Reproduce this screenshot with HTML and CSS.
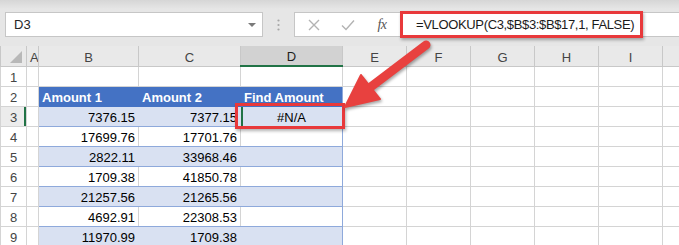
FILE: index.html
```html
<!DOCTYPE html>
<html>
  <head>
    <meta charset="utf-8">
    <title>VLOOKUP #N/A</title>
    <link rel="stylesheet" href="styles.css">
  </head>

  <body>
    <div class="app">
      <div class="toolbar">
        <div class="namebox"><span>D3</span><span class="caret"></span></div>
        <div class="grip">
          <svg width="3" height="12" viewBox="0 0 3 12"><circle cx="1.5" cy="1.5" r="1.1"/><circle cx="1.5" cy="6" r="1.1"/><circle cx="1.5" cy="10.5" r="1.1"/></svg>
        </div>
        <div class="fxbar">
          <span class="btn"><svg width="12" height="12" viewBox="0 0 12 12"><path d="M1 1 L11 11 M11 1 L1 11"/></svg></span>
          <span class="btn"><svg width="14" height="12" viewBox="0 0 14 12"><path d="M1 6.5 L5 10.5 L13 1.5"/></svg></span>
          <span class="btn fx">fx</span>
          <div class="formula">=VLOOKUP(C3,$B$3:$B$17,1, FALSE)</div>
        </div>
      </div>

      <div class="sheetwrap">
        <table class="sheet">
          <colgroup>
            <col style="width:26px"><col style="width:12px"><col style="width:100px"><col style="width:102px"><col style="width:102px">
            <col style="width:64px"><col style="width:64px"><col style="width:64px"><col style="width:64px"><col style="width:64px"><col style="width:40px">
          </colgroup>
          <tr class="colhead">
            <th class="corner"><span class="tri"></span></th><th>A</th><th>B</th><th>C</th><th class="sel">D</th><th>E</th><th>F</th><th>G</th><th>H</th><th>I</th><th></th>
          </tr>
          <tr>
            <th class="rowhead">1</th><td></td><td></td><td></td><td></td><td></td><td></td><td></td><td></td><td></td><td></td>
          </tr>
          <tr>
            <th class="rowhead">2</th><td></td><td class="hdr first">Amount 1</td><td class="hdr">Amount 2</td><td class="hdr last">Find Amount</td><td></td><td></td><td></td><td></td><td></td><td></td>
          </tr>
          <tr class="band">
            <th class="rowhead cur">3</th><td></td><td class="num first">7376.15</td><td class="num">7377.15</td><td class="ctr last active">#N/A</td><td></td><td></td><td></td><td></td><td></td><td></td>
          </tr>
          <tr class="plain">
            <th class="rowhead">4</th><td></td><td class="num first">17699.76</td><td class="num">17701.76</td><td class="last"></td><td></td><td></td><td></td><td></td><td></td><td></td>
          </tr>
          <tr class="band">
            <th class="rowhead">5</th><td></td><td class="num first">2822.11</td><td class="num">33968.46</td><td class="last"></td><td></td><td></td><td></td><td></td><td></td><td></td>
          </tr>
          <tr class="plain">
            <th class="rowhead">6</th><td></td><td class="num first">1709.38</td><td class="num">41850.78</td><td class="last"></td><td></td><td></td><td></td><td></td><td></td><td></td>
          </tr>
          <tr class="band">
            <th class="rowhead">7</th><td></td><td class="num first">21257.56</td><td class="num">21265.56</td><td class="last"></td><td></td><td></td><td></td><td></td><td></td><td></td>
          </tr>
          <tr class="plain">
            <th class="rowhead">8</th><td></td><td class="num first">4692.91</td><td class="num">22308.53</td><td class="last"></td><td></td><td></td><td></td><td></td><td></td><td></td>
          </tr>
          <tr class="band">
            <th class="rowhead">9</th><td></td><td class="num first">11970.99</td><td class="num">1709.38</td><td class="last"></td><td></td><td></td><td></td><td></td><td></td><td></td>
          </tr>
        </table>
      </div>

      <!-- annotation: box round D3 and arrow from the formula -->
      <div class="callout"></div>
      <svg class="arrow" width="679" height="245" viewBox="0 0 679 245">
        <line x1="426" y1="45" x2="368" y2="89"/>
        <polygon points="345,107 361,75 380,99"/>
      </svg>
    </div>
  </body>
</html>
```

FILE: styles.css
```css
html, body {
  margin: 0;
  padding: 0;
}
body {
  width: 679px;
  height: 245px;
  overflow: hidden;
  background: #fff;
  font-family: "Liberation Sans", Arial, sans-serif;
}
.app {
  position: relative;
  width: 679px;
  height: 245px;
  overflow: hidden;
}

/* formula bar */
.toolbar {
  height: 46px;
  box-sizing: border-box;
  padding: 12px 0 0 5px;
  display: flex;
  align-items: flex-start;
  background: linear-gradient(#d6d6d6, #e6e6e6 9px, #e6e6e6);
}
.namebox {
  width: 258px;
  height: 25px;
  box-sizing: border-box;
  border: 1px solid #c6c6c6;
  background: #fff;
  display: flex;
  align-items: center;
  justify-content: space-between;
  padding: 0 6px 0 8px;
  font-size: 13px;
  color: #262626;
}
.caret {
  width: 0;
  height: 0;
  border-left: 4px solid transparent;
  border-right: 4px solid transparent;
  border-top: 4px solid #7a7a7a;
}
.grip {
  width: 31px;
  height: 25px;
  display: flex;
  align-items: center;
  justify-content: center;
}
.grip svg {
  fill: #a6a6a6;
}
.fxbar {
  flex: 1;
  height: 25px;
  margin-right: -30px;
  box-sizing: border-box;
  border: 1px solid #c6c6c6;
  background: #fff;
  display: flex;
  align-items: center;
  padding-left: 9px;
}
.btn {
  width: 20px;
  height: 20px;
  display: flex;
  align-items: center;
  justify-content: center;
  margin-right: 14px;
}
.btn svg path {
  fill: none;
  stroke: #b3b3b3;
  stroke-width: 1.4;
}
.btn.fx {
  margin-right: 8px;
  font-family: "Liberation Serif", "Times New Roman", serif;
  font-style: italic;
  font-size: 14px;
  color: #555;
  letter-spacing: -0.5px;
}
.formula {
  width: 243px;
  height: 27px;
  margin: -2px 0;
  box-sizing: border-box;
  border: 3px solid #e8393b;
  box-shadow: 1px 2px 3px rgba(0, 0, 0, 0.3);
  background: #fff;
  padding-left: 13px;
  font-size: 13px;
  line-height: 21px;
  letter-spacing: -0.35px;
  color: #1a1a1a;
  white-space: nowrap;
}

/* grid */
.sheetwrap {
  width: 679px;
  overflow: hidden;
}
.sheet {
  table-layout: fixed;
  width: 692px;
  border-collapse: collapse;
  font-size: 13px;
  color: #000;
}
.sheet td, .sheet th {
  height: 20px;
  padding: 0 3px;
  box-sizing: border-box;
  border: 1px solid #d4d4d4;
  vertical-align: bottom;
  line-height: 16px;
  white-space: nowrap;
  overflow: hidden;
  font-weight: normal;
}
.colhead th {
  background: #e9e9e9;
  border-color: #c8c8c8;
  border-top: none;
  color: #444;
  text-align: center;
  line-height: 17px;
}
.colhead th.sel {
  background: #d2d2d2;
  border-bottom: 2px solid #217346;
  color: #1e1e1e;
}
.corner {
  position: relative;
}
.tri {
  position: absolute;
  right: 4px;
  bottom: 3px;
  width: 0;
  height: 0;
  border-left: 12px solid transparent;
  border-bottom: 12px solid #b8b8b8;
}
.rowhead {
  background: #fff;
  color: #444;
  text-align: center;
  border-color: #d4d4d4;
  border-right-color: #c8c8c8;
  padding: 0;
}
.sheet th.rowhead {
  padding: 0;
}
.rowhead.cur {
  background: #ececec;
  box-shadow: inset -2px 0 0 #217346;
}

/* table range B2:D9 */
.sheet td.hdr {
  background: #4472c4;
  color: #fff;
  font-weight: bold;
  border-color: #4472c4;
}
.band td.num, .band td.ctr, .band td.last {
  background: #d9e1f2;
  border-left-color: #d9e1f2;
  border-right-color: #d9e1f2;
}
.band td, .plain td {
  border-top-color: #8ea9db;
}
.sheet td.first {
  border-left-color: #8ea9db;
}
.sheet td.last {
  border-right-color: #8ea9db;
}
.plain td.num, .plain td.last, .band td.num, .band td.last {
  border-bottom-color: #8ea9db;
}
.num {
  text-align: right;
}
.ctr {
  text-align: center;
}
.active {
  box-shadow: inset 2px 0 0 #217346;
}

/* annotation overlay */
.callout {
  position: absolute;
  left: 235px;
  top: 103px;
  width: 110px;
  height: 26px;
  box-sizing: border-box;
  border: 3px solid #e8393b;
  box-shadow: 1px 2px 3px rgba(0, 0, 0, 0.3);
}
.arrow {
  position: absolute;
  left: 0;
  top: 0;
  pointer-events: none;
  filter: drop-shadow(1px 2px 1.5px rgba(0, 0, 0, 0.35));
}
.arrow line {
  stroke: #e8413f;
  stroke-width: 9;
  stroke-linecap: round;
}
.arrow polygon {
  fill: #e8413f;
  stroke: #e8413f;
  stroke-width: 2;
  stroke-linejoin: round;
}
```
